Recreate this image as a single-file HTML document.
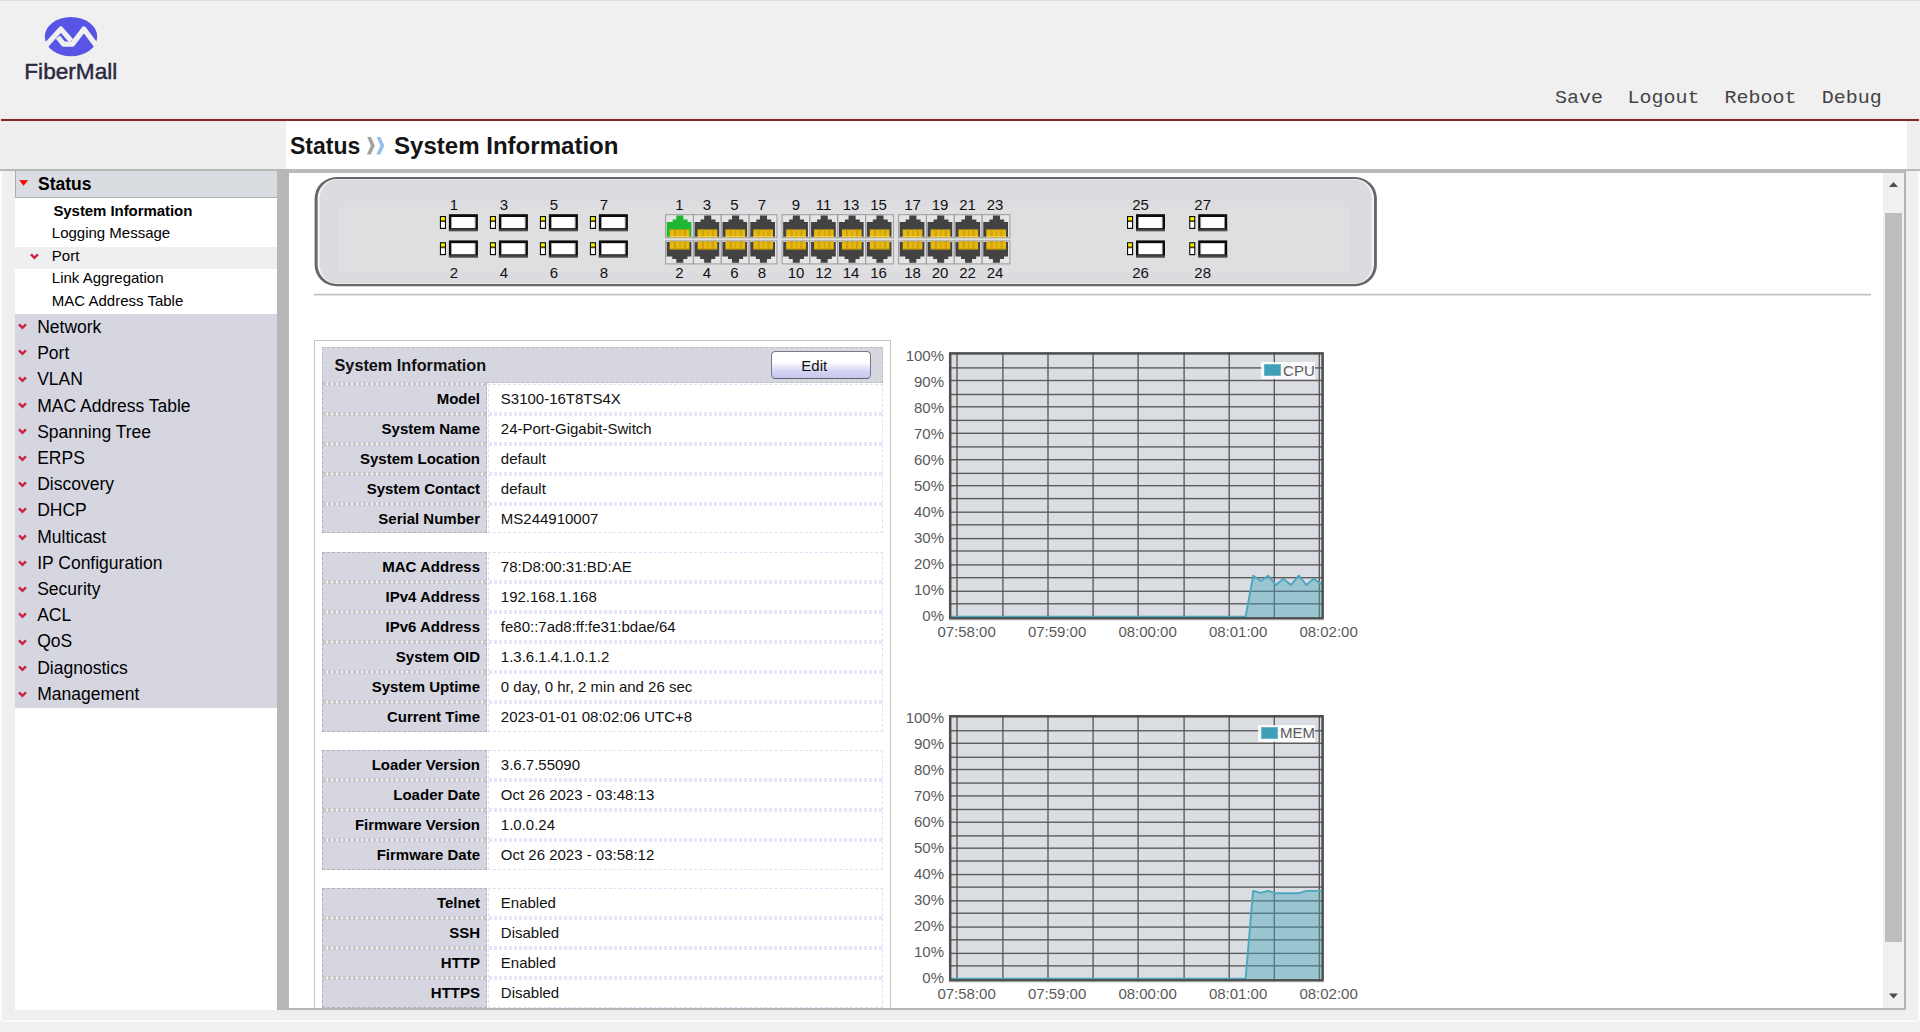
<!DOCTYPE html>
<html><head><meta charset="utf-8"><title>System Information</title><style>
*{box-sizing:border-box}
html,body{margin:0;padding:0}
body{width:1920px;height:1032px;overflow:hidden;position:relative;background:#f0f0f0;font-family:"Liberation Sans",sans-serif;color:#000}
.a{position:absolute}
.t{position:absolute;white-space:nowrap;line-height:1}
.mono{font-family:"Liberation Mono",monospace}
.m{font-size:17.5px;left:37.2px}
.s{font-size:15px;left:51.8px}
.lb{position:absolute;left:0;width:158px;height:26px;text-align:right;font-weight:bold;font-size:15px;line-height:26px;white-space:nowrap}
.vl{position:absolute;left:178.8px;height:26px;font-size:15px;line-height:26px;white-space:nowrap;color:#111}
.lbg{position:absolute;left:0;width:165px;background:#d6d6e0;border:1px dashed #b2b2ba}
.vbg{position:absolute;left:166px;width:395px;background:#fff;border:1px dashed #dde1f6}
.sep{position:absolute;left:1px;width:163px;height:4px;background:repeating-linear-gradient(90deg,#c6c8ca 0,#c6c8ca 3px,#dcdce4 3px,#dcdce4 5px)}
.sep:after{content:'';position:absolute;left:0;right:0;top:1px;height:2px;background:repeating-linear-gradient(90deg,#c6c8ca 0,#c6c8ca 3px,#f2f2f7 3px,#f2f2f7 5px)}
.vsep{position:absolute;left:167px;width:393px;height:4px;background:repeating-linear-gradient(90deg,#e4e7fa 0,#e4e7fa 3px,#ffffff 3px,#ffffff 5px)}
.yl{position:absolute;width:50px;text-align:right;font-size:15px;color:#595959;line-height:1;white-space:nowrap}
.xl{position:absolute;width:80px;text-align:center;font-size:15px;color:#595959;line-height:1;white-space:nowrap}
.pn{position:absolute;width:40px;text-align:center;font-size:15px;line-height:1;color:#111}
</style></head><body>
<div class="a" style="left:0;top:0;width:1920px;height:1px;background:#dddddb"></div>
<div class="a" style="left:0;top:171px;width:2px;height:849px;background:#fbfbfb"></div>
<div class="a" style="left:1918px;top:171px;width:2px;height:849px;background:#fbfbfb"></div>
<div class="a" style="left:2px;top:1020px;width:1916px;height:2px;background:#fbfbfb"></div>
<div class="a" style="left:2px;top:121px;width:1916px;height:899px;background:#efefef"></div>
<div class="a" style="left:1px;top:119px;width:1918px;height:2px;background:#852728;box-shadow:0 0 1px #e9a0a0"></div>
<div class="a" style="left:286px;top:121px;width:1621px;height:49px;background:#fff"></div>
<div class="a" style="left:15px;top:171px;width:262px;height:839px;background:#fff"></div>
<div class="a" style="left:288px;top:171px;width:1616px;height:837px;background:#fff"></div>
<div class="a" style="left:0;top:169px;width:1920px;height:2px;background:#b9b9b9"></div>
<div class="a" style="left:288px;top:171px;width:1618px;height:2px;background:#b9b9b9"></div>
<div class="a" style="left:277px;top:169px;width:11.5px;height:841px;background:#b7b7b7"></div>
<div class="a" style="left:1904px;top:171px;width:2px;height:839px;background:#b5b5b5"></div>
<div class="a" style="left:277px;top:1008px;width:1629px;height:2px;background:#b5b5b5"></div>
<svg class="a" style="left:40px;top:12px" width="70" height="50" viewBox="40 12 70 50">
<ellipse cx="71" cy="36.6" rx="26.2" ry="19.7" fill="#5854e6"/>
<path d="M45 46.4 L60.9 29.1 L71.2 40.9" fill="none" stroke="#f0f0f0" stroke-width="5.2" stroke-linejoin="round"/>
<path d="M57.9 37.2 L63.6 44.1 L72.4 44.1 L83.9 29.1 L96.8 46.3" fill="none" stroke="#f0f0f0" stroke-width="5.2" stroke-linejoin="round"/>
</svg>
<svg class="a" style="left:20px;top:58px" width="110" height="28" viewBox="0 0 110 28"><text x="4.3" y="20.5" font-family="Liberation Sans" font-size="22.6" fill="#2b2940" textLength="93" lengthAdjust="spacingAndGlyphs" stroke="#2b2940" stroke-width="0.45">FiberMall</text></svg>
<div class="t mono" style="left:1555px;top:88px;font-size:20px;color:#454545;transform-origin:0 15.3px;transform:scaleY(0.89)">Save</div>
<div class="t mono" style="left:1627.6px;top:88px;font-size:20px;color:#454545;transform-origin:0 15.3px;transform:scaleY(0.89)">Logout</div>
<div class="t mono" style="left:1724.6px;top:88px;font-size:20px;color:#454545;transform-origin:0 15.3px;transform:scaleY(0.89)">Reboot</div>
<div class="t mono" style="left:1821.8px;top:88px;font-size:20px;color:#454545;transform-origin:0 15.3px;transform:scaleY(0.89)">Debug</div>
<div class="t" style="left:289.5px;top:134.2px;font-size:24.4px;font-weight:bold;color:#151515;transform-origin:0 0;transform:scaleX(0.942)">Status</div>
<div class="t" style="left:393.5px;top:134.2px;font-size:24.4px;font-weight:bold;color:#151515;transform-origin:0 0;transform:scaleX(0.986)">System Information</div>
<svg class="a" style="left:364px;top:136px" width="24" height="22" viewBox="364 136 24 22">
<path d="M367.2 136.9 L371.0 136.9 L374.8 145.7 L370.8 154.6 L366.8 154.6 L370.9 145.7 Z" fill="#a3a3a3"/>
<path d="M376.7 136.9 L380.5 136.9 L384.3 145.7 L380.3 154.6 L376.3 154.6 L380.4 145.7 Z" fill="#95bfec"/>
</svg>
<div class="a" style="left:15px;top:171px;width:262px;height:27px;background:#d9dce0;border-left:1px solid #adadad;border-bottom:1px solid #b3b3b3"></div>
<svg class="a" style="left:18px;top:178px" width="12" height="10" viewBox="18 178 12 10">
<defs><linearGradient id="tg" x1="0" y1="0" x2="0" y2="1"><stop offset="0" stop-color="#d93030"/><stop offset="0.35" stop-color="#ff0000"/><stop offset="1" stop-color="#ff0000"/></linearGradient></defs>
<path d="M19.0 180.0 L28.2 180.0 L23.6 185.8 Z" fill="url(#tg)"/></svg>
<div class="t" style="left:38px;top:175.5px;font-size:17.5px;font-weight:bold">Status</div>
<div class="a" style="left:15px;top:247px;width:262px;height:22px;background:#efefef"></div>
<div class="t s" style="top:203.2px;left:53.4px;font-weight:bold;letter-spacing:-0.065px">System Information</div>
<div class="t s" style="top:224.6px">Logging Message</div>
<div class="t s" style="top:247.7px">Port</div>
<div class="t s" style="top:269.9px">Link Aggregation</div>
<div class="t s" style="top:293.0px">MAC Address Table</div>
<svg class="a" style="left:29.4px;top:252.4px" width="11" height="9" viewBox="-1 -1 11 9"><path d="M1.0 1.35 L4.45 4.75 L7.9 1.35" fill="none" stroke="#cb2143" stroke-width="2.45" stroke-linejoin="miter"/></svg>
<div class="a" style="left:15px;top:314px;width:262px;height:394px;background:#d6d6e0"></div>
<div class="t m" style="top:318.55px">Network</div>
<svg class="a" style="left:17px;top:322.1px" width="11" height="9" viewBox="-1 -1 11 9"><path d="M1.0 1.35 L4.45 4.75 L7.9 1.35" fill="none" stroke="#cb2143" stroke-width="2.45" stroke-linejoin="miter"/></svg>
<div class="t m" style="top:344.55px">Port</div>
<svg class="a" style="left:17px;top:348.40000000000003px" width="11" height="9" viewBox="-1 -1 11 9"><path d="M1.0 1.35 L4.45 4.75 L7.9 1.35" fill="none" stroke="#cb2143" stroke-width="2.45" stroke-linejoin="miter"/></svg>
<div class="t m" style="top:370.55px">VLAN</div>
<svg class="a" style="left:17px;top:374.70000000000005px" width="11" height="9" viewBox="-1 -1 11 9"><path d="M1.0 1.35 L4.45 4.75 L7.9 1.35" fill="none" stroke="#cb2143" stroke-width="2.45" stroke-linejoin="miter"/></svg>
<div class="t m" style="top:397.55px">MAC Address Table</div>
<svg class="a" style="left:17px;top:401.0px" width="11" height="9" viewBox="-1 -1 11 9"><path d="M1.0 1.35 L4.45 4.75 L7.9 1.35" fill="none" stroke="#cb2143" stroke-width="2.45" stroke-linejoin="miter"/></svg>
<div class="t m" style="top:423.55px">Spanning Tree</div>
<svg class="a" style="left:17px;top:427.3px" width="11" height="9" viewBox="-1 -1 11 9"><path d="M1.0 1.35 L4.45 4.75 L7.9 1.35" fill="none" stroke="#cb2143" stroke-width="2.45" stroke-linejoin="miter"/></svg>
<div class="t m" style="top:449.55px">ERPS</div>
<svg class="a" style="left:17px;top:453.6px" width="11" height="9" viewBox="-1 -1 11 9"><path d="M1.0 1.35 L4.45 4.75 L7.9 1.35" fill="none" stroke="#cb2143" stroke-width="2.45" stroke-linejoin="miter"/></svg>
<div class="t m" style="top:475.55px">Discovery</div>
<svg class="a" style="left:17px;top:479.90000000000003px" width="11" height="9" viewBox="-1 -1 11 9"><path d="M1.0 1.35 L4.45 4.75 L7.9 1.35" fill="none" stroke="#cb2143" stroke-width="2.45" stroke-linejoin="miter"/></svg>
<div class="t m" style="top:501.55px">DHCP</div>
<svg class="a" style="left:17px;top:506.20000000000005px" width="11" height="9" viewBox="-1 -1 11 9"><path d="M1.0 1.35 L4.45 4.75 L7.9 1.35" fill="none" stroke="#cb2143" stroke-width="2.45" stroke-linejoin="miter"/></svg>
<div class="t m" style="top:528.55px">Multicast</div>
<svg class="a" style="left:17px;top:532.5px" width="11" height="9" viewBox="-1 -1 11 9"><path d="M1.0 1.35 L4.45 4.75 L7.9 1.35" fill="none" stroke="#cb2143" stroke-width="2.45" stroke-linejoin="miter"/></svg>
<div class="t m" style="top:554.55px">IP Configuration</div>
<svg class="a" style="left:17px;top:558.8000000000001px" width="11" height="9" viewBox="-1 -1 11 9"><path d="M1.0 1.35 L4.45 4.75 L7.9 1.35" fill="none" stroke="#cb2143" stroke-width="2.45" stroke-linejoin="miter"/></svg>
<div class="t m" style="top:580.55px">Security</div>
<svg class="a" style="left:17px;top:585.1px" width="11" height="9" viewBox="-1 -1 11 9"><path d="M1.0 1.35 L4.45 4.75 L7.9 1.35" fill="none" stroke="#cb2143" stroke-width="2.45" stroke-linejoin="miter"/></svg>
<div class="t m" style="top:606.55px">ACL</div>
<svg class="a" style="left:17px;top:611.4000000000001px" width="11" height="9" viewBox="-1 -1 11 9"><path d="M1.0 1.35 L4.45 4.75 L7.9 1.35" fill="none" stroke="#cb2143" stroke-width="2.45" stroke-linejoin="miter"/></svg>
<div class="t m" style="top:632.55px">QoS</div>
<svg class="a" style="left:17px;top:637.7px" width="11" height="9" viewBox="-1 -1 11 9"><path d="M1.0 1.35 L4.45 4.75 L7.9 1.35" fill="none" stroke="#cb2143" stroke-width="2.45" stroke-linejoin="miter"/></svg>
<div class="t m" style="top:659.55px">Diagnostics</div>
<svg class="a" style="left:17px;top:664.0px" width="11" height="9" viewBox="-1 -1 11 9"><path d="M1.0 1.35 L4.45 4.75 L7.9 1.35" fill="none" stroke="#cb2143" stroke-width="2.45" stroke-linejoin="miter"/></svg>
<div class="t m" style="top:685.55px">Management</div>
<svg class="a" style="left:17px;top:690.3px" width="11" height="9" viewBox="-1 -1 11 9"><path d="M1.0 1.35 L4.45 4.75 L7.9 1.35" fill="none" stroke="#cb2143" stroke-width="2.45" stroke-linejoin="miter"/></svg>
<div class="a" style="left:1883px;top:173px;width:21px;height:835px;background:#f0f0f0"></div>
<div class="a" style="left:1885px;top:213px;width:17px;height:729px;background:#bdbdbd"></div>
<svg class="a" style="left:1887px;top:180px" width="13" height="9" viewBox="0 0 13 9"><path d="M2 7 L6.5 2 L11 7 Z" fill="#4d4d4d"/></svg>
<svg class="a" style="left:1887px;top:992px" width="13" height="9" viewBox="0 0 13 9"><path d="M2 1.6 L11 1.6 L6.5 6.6 Z" fill="#4d4d4d"/></svg>
<svg class="a" style="left:314px;top:176px" width="1064" height="112" viewBox="314 176 1064 112"><rect x="314.6" y="177" width="1062.3" height="109.2" rx="22" ry="21.5" fill="#676767"/><rect x="317.6" y="179.1" width="1056.4" height="104.8" rx="19.3" ry="19.3" fill="#f5f5f9"/><rect x="319.7" y="179.6" width="1052.2" height="104" rx="18" ry="18.6" fill="#dcdce0"/><rect x="338" y="206.6" width="1012" height="66" fill="#dfdfe1"/><g transform="translate(438.90 213.20)"><rect x="1" y="2.8" width="6.1" height="13" fill="#0a0a0a"/><rect x="2.1" y="3.9" width="3.9" height="3.4" fill="#fff200"/><rect x="2.1" y="7.3" width="3.9" height="1.5" fill="#5a4a00"/><rect x="2.1" y="8.8" width="3.9" height="5.8" fill="#ffffff"/><rect x="10" y="1" width="29" height="16.9" fill="#0c0c0c"/><rect x="10" y="15.6" width="29" height="2.3" fill="#3c3c3c"/><rect x="10" y="17.1" width="29" height="0.8" fill="#5a5a5a"/><rect x="12.2" y="3.8" width="24.3" height="11.1" fill="#ffffff"/><rect x="12.2" y="3.8" width="0.7" height="11.1" fill="#8a8a8a"/><rect x="35.8" y="3.8" width="0.7" height="11.1" fill="#8a8a8a"/></g><g transform="translate(438.90 239.40)"><rect x="1" y="2.8" width="6.1" height="13" fill="#0a0a0a"/><rect x="2.1" y="3.9" width="3.9" height="3.4" fill="#fff200"/><rect x="2.1" y="7.3" width="3.9" height="1.5" fill="#5a4a00"/><rect x="2.1" y="8.8" width="3.9" height="5.8" fill="#ffffff"/><rect x="10" y="1" width="29" height="16.9" fill="#0c0c0c"/><rect x="10" y="15.6" width="29" height="2.3" fill="#3c3c3c"/><rect x="10" y="17.1" width="29" height="0.8" fill="#5a5a5a"/><rect x="12.2" y="3.8" width="24.3" height="11.1" fill="#ffffff"/><rect x="12.2" y="3.8" width="0.7" height="11.1" fill="#8a8a8a"/><rect x="35.8" y="3.8" width="0.7" height="11.1" fill="#8a8a8a"/></g><g transform="translate(488.90 213.20)"><rect x="1" y="2.8" width="6.1" height="13" fill="#0a0a0a"/><rect x="2.1" y="3.9" width="3.9" height="3.4" fill="#fff200"/><rect x="2.1" y="7.3" width="3.9" height="1.5" fill="#5a4a00"/><rect x="2.1" y="8.8" width="3.9" height="5.8" fill="#ffffff"/><rect x="10" y="1" width="29" height="16.9" fill="#0c0c0c"/><rect x="10" y="15.6" width="29" height="2.3" fill="#3c3c3c"/><rect x="10" y="17.1" width="29" height="0.8" fill="#5a5a5a"/><rect x="12.2" y="3.8" width="24.3" height="11.1" fill="#ffffff"/><rect x="12.2" y="3.8" width="0.7" height="11.1" fill="#8a8a8a"/><rect x="35.8" y="3.8" width="0.7" height="11.1" fill="#8a8a8a"/></g><g transform="translate(488.90 239.40)"><rect x="1" y="2.8" width="6.1" height="13" fill="#0a0a0a"/><rect x="2.1" y="3.9" width="3.9" height="3.4" fill="#fff200"/><rect x="2.1" y="7.3" width="3.9" height="1.5" fill="#5a4a00"/><rect x="2.1" y="8.8" width="3.9" height="5.8" fill="#ffffff"/><rect x="10" y="1" width="29" height="16.9" fill="#0c0c0c"/><rect x="10" y="15.6" width="29" height="2.3" fill="#3c3c3c"/><rect x="10" y="17.1" width="29" height="0.8" fill="#5a5a5a"/><rect x="12.2" y="3.8" width="24.3" height="11.1" fill="#ffffff"/><rect x="12.2" y="3.8" width="0.7" height="11.1" fill="#8a8a8a"/><rect x="35.8" y="3.8" width="0.7" height="11.1" fill="#8a8a8a"/></g><g transform="translate(538.90 213.20)"><rect x="1" y="2.8" width="6.1" height="13" fill="#0a0a0a"/><rect x="2.1" y="3.9" width="3.9" height="3.4" fill="#fff200"/><rect x="2.1" y="7.3" width="3.9" height="1.5" fill="#5a4a00"/><rect x="2.1" y="8.8" width="3.9" height="5.8" fill="#ffffff"/><rect x="10" y="1" width="29" height="16.9" fill="#0c0c0c"/><rect x="10" y="15.6" width="29" height="2.3" fill="#3c3c3c"/><rect x="10" y="17.1" width="29" height="0.8" fill="#5a5a5a"/><rect x="12.2" y="3.8" width="24.3" height="11.1" fill="#ffffff"/><rect x="12.2" y="3.8" width="0.7" height="11.1" fill="#8a8a8a"/><rect x="35.8" y="3.8" width="0.7" height="11.1" fill="#8a8a8a"/></g><g transform="translate(538.90 239.40)"><rect x="1" y="2.8" width="6.1" height="13" fill="#0a0a0a"/><rect x="2.1" y="3.9" width="3.9" height="3.4" fill="#fff200"/><rect x="2.1" y="7.3" width="3.9" height="1.5" fill="#5a4a00"/><rect x="2.1" y="8.8" width="3.9" height="5.8" fill="#ffffff"/><rect x="10" y="1" width="29" height="16.9" fill="#0c0c0c"/><rect x="10" y="15.6" width="29" height="2.3" fill="#3c3c3c"/><rect x="10" y="17.1" width="29" height="0.8" fill="#5a5a5a"/><rect x="12.2" y="3.8" width="24.3" height="11.1" fill="#ffffff"/><rect x="12.2" y="3.8" width="0.7" height="11.1" fill="#8a8a8a"/><rect x="35.8" y="3.8" width="0.7" height="11.1" fill="#8a8a8a"/></g><g transform="translate(588.90 213.20)"><rect x="1" y="2.8" width="6.1" height="13" fill="#0a0a0a"/><rect x="2.1" y="3.9" width="3.9" height="3.4" fill="#fff200"/><rect x="2.1" y="7.3" width="3.9" height="1.5" fill="#5a4a00"/><rect x="2.1" y="8.8" width="3.9" height="5.8" fill="#ffffff"/><rect x="10" y="1" width="29" height="16.9" fill="#0c0c0c"/><rect x="10" y="15.6" width="29" height="2.3" fill="#3c3c3c"/><rect x="10" y="17.1" width="29" height="0.8" fill="#5a5a5a"/><rect x="12.2" y="3.8" width="24.3" height="11.1" fill="#ffffff"/><rect x="12.2" y="3.8" width="0.7" height="11.1" fill="#8a8a8a"/><rect x="35.8" y="3.8" width="0.7" height="11.1" fill="#8a8a8a"/></g><g transform="translate(588.90 239.40)"><rect x="1" y="2.8" width="6.1" height="13" fill="#0a0a0a"/><rect x="2.1" y="3.9" width="3.9" height="3.4" fill="#fff200"/><rect x="2.1" y="7.3" width="3.9" height="1.5" fill="#5a4a00"/><rect x="2.1" y="8.8" width="3.9" height="5.8" fill="#ffffff"/><rect x="10" y="1" width="29" height="16.9" fill="#0c0c0c"/><rect x="10" y="15.6" width="29" height="2.3" fill="#3c3c3c"/><rect x="10" y="17.1" width="29" height="0.8" fill="#5a5a5a"/><rect x="12.2" y="3.8" width="24.3" height="11.1" fill="#ffffff"/><rect x="12.2" y="3.8" width="0.7" height="11.1" fill="#8a8a8a"/><rect x="35.8" y="3.8" width="0.7" height="11.1" fill="#8a8a8a"/></g><g transform="translate(1126.00 213.20)"><rect x="1" y="2.8" width="6.1" height="13" fill="#0a0a0a"/><rect x="2.1" y="3.9" width="3.9" height="3.4" fill="#fff200"/><rect x="2.1" y="7.3" width="3.9" height="1.5" fill="#5a4a00"/><rect x="2.1" y="8.8" width="3.9" height="5.8" fill="#ffffff"/><rect x="10" y="1" width="29" height="16.9" fill="#0c0c0c"/><rect x="10" y="15.6" width="29" height="2.3" fill="#3c3c3c"/><rect x="10" y="17.1" width="29" height="0.8" fill="#5a5a5a"/><rect x="12.2" y="3.8" width="24.3" height="11.1" fill="#ffffff"/><rect x="12.2" y="3.8" width="0.7" height="11.1" fill="#8a8a8a"/><rect x="35.8" y="3.8" width="0.7" height="11.1" fill="#8a8a8a"/></g><g transform="translate(1126.00 239.40)"><rect x="1" y="2.8" width="6.1" height="13" fill="#0a0a0a"/><rect x="2.1" y="3.9" width="3.9" height="3.4" fill="#fff200"/><rect x="2.1" y="7.3" width="3.9" height="1.5" fill="#5a4a00"/><rect x="2.1" y="8.8" width="3.9" height="5.8" fill="#ffffff"/><rect x="10" y="1" width="29" height="16.9" fill="#0c0c0c"/><rect x="10" y="15.6" width="29" height="2.3" fill="#3c3c3c"/><rect x="10" y="17.1" width="29" height="0.8" fill="#5a5a5a"/><rect x="12.2" y="3.8" width="24.3" height="11.1" fill="#ffffff"/><rect x="12.2" y="3.8" width="0.7" height="11.1" fill="#8a8a8a"/><rect x="35.8" y="3.8" width="0.7" height="11.1" fill="#8a8a8a"/></g><g transform="translate(1188.20 213.20)"><rect x="1" y="2.8" width="6.1" height="13" fill="#0a0a0a"/><rect x="2.1" y="3.9" width="3.9" height="3.4" fill="#fff200"/><rect x="2.1" y="7.3" width="3.9" height="1.5" fill="#5a4a00"/><rect x="2.1" y="8.8" width="3.9" height="5.8" fill="#ffffff"/><rect x="10" y="1" width="29" height="16.9" fill="#0c0c0c"/><rect x="10" y="15.6" width="29" height="2.3" fill="#3c3c3c"/><rect x="10" y="17.1" width="29" height="0.8" fill="#5a5a5a"/><rect x="12.2" y="3.8" width="24.3" height="11.1" fill="#ffffff"/><rect x="12.2" y="3.8" width="0.7" height="11.1" fill="#8a8a8a"/><rect x="35.8" y="3.8" width="0.7" height="11.1" fill="#8a8a8a"/></g><g transform="translate(1188.20 239.40)"><rect x="1" y="2.8" width="6.1" height="13" fill="#0a0a0a"/><rect x="2.1" y="3.9" width="3.9" height="3.4" fill="#fff200"/><rect x="2.1" y="7.3" width="3.9" height="1.5" fill="#5a4a00"/><rect x="2.1" y="8.8" width="3.9" height="5.8" fill="#ffffff"/><rect x="10" y="1" width="29" height="16.9" fill="#0c0c0c"/><rect x="10" y="15.6" width="29" height="2.3" fill="#3c3c3c"/><rect x="10" y="17.1" width="29" height="0.8" fill="#5a5a5a"/><rect x="12.2" y="3.8" width="24.3" height="11.1" fill="#ffffff"/><rect x="12.2" y="3.8" width="0.7" height="11.1" fill="#8a8a8a"/><rect x="35.8" y="3.8" width="0.7" height="11.1" fill="#8a8a8a"/></g><g transform="translate(665.10 214.2)"><rect x="0" y="0" width="28.7" height="24.0" fill="#9c9c9c"/><rect x="1" y="1" width="26.7" height="22.0" fill="#e5e5e5"/><path d="M11.20 1.40 L18.30 1.40 L18.30 5.35 L22.50 5.35 L22.50 7.90 L26.30 7.90 L26.30 22.60 L1.60 22.60 L1.60 7.90 L7.60 7.90 L7.60 5.35 L11.20 5.35 Z" fill="#1fb634"/><rect x="4.60" y="15.3" width="19.70" height="8.0" fill="#e7b90e"/><rect x="8.93" y="15.3" width="0.9" height="8.0" fill="#c79c10"/><rect x="9.92" y="15.3" width="0.9" height="8.0" fill="#c79c10"/><rect x="14.45" y="15.3" width="0.9" height="8.0" fill="#c79c10"/><rect x="18.78" y="15.3" width="0.9" height="8.0" fill="#c79c10"/><rect x="19.97" y="15.3" width="0.9" height="8.0" fill="#c79c10"/><rect x="4.60" y="22.10" width="19.70" height="0.8" fill="#f1d77a"/><rect x="4.60" y="15.30" width="19.70" height="0.7" fill="#b88f0c" fill-opacity="0.7"/></g><g transform="translate(665.10 240.4)"><rect x="0" y="0" width="28.7" height="24.0" fill="#9c9c9c"/><rect x="1" y="1" width="26.7" height="22.0" fill="#e5e5e5"/><path d="M1.60 1.60 L26.30 1.60 L26.30 16.00 L22.30 16.00 L22.30 18.60 L18.20 18.60 L18.20 22.40 L11.20 22.40 L11.20 18.60 L7.20 18.60 L7.20 16.00 L1.60 16.00 Z" fill="#424242"/><rect x="4.60" y="1.1" width="19.70" height="7.9" fill="#e7b90e"/><rect x="8.93" y="1.1" width="0.9" height="7.9" fill="#c79c10"/><rect x="9.92" y="1.1" width="0.9" height="7.9" fill="#c79c10"/><rect x="14.45" y="1.1" width="0.9" height="7.9" fill="#c79c10"/><rect x="18.78" y="1.1" width="0.9" height="7.9" fill="#c79c10"/><rect x="19.97" y="1.1" width="0.9" height="7.9" fill="#c79c10"/><rect x="4.60" y="8.20" width="19.70" height="0.8" fill="#b88f0c"/><rect x="4.60" y="1.10" width="19.70" height="0.7" fill="#b88f0c" fill-opacity="0.7"/></g><g transform="translate(692.97 214.2)"><rect x="0" y="0" width="28.7" height="24.0" fill="#9c9c9c"/><rect x="1" y="1" width="26.7" height="22.0" fill="#e5e5e5"/><path d="M11.20 1.40 L18.30 1.40 L18.30 5.35 L22.50 5.35 L22.50 7.90 L26.30 7.90 L26.30 22.60 L1.60 22.60 L1.60 7.90 L7.60 7.90 L7.60 5.35 L11.20 5.35 Z" fill="#424242"/><rect x="4.60" y="15.3" width="19.70" height="8.0" fill="#e7b90e"/><rect x="8.93" y="15.3" width="0.9" height="8.0" fill="#c79c10"/><rect x="9.92" y="15.3" width="0.9" height="8.0" fill="#c79c10"/><rect x="14.45" y="15.3" width="0.9" height="8.0" fill="#c79c10"/><rect x="18.78" y="15.3" width="0.9" height="8.0" fill="#c79c10"/><rect x="19.97" y="15.3" width="0.9" height="8.0" fill="#c79c10"/><rect x="4.60" y="22.10" width="19.70" height="0.8" fill="#f1d77a"/><rect x="4.60" y="15.30" width="19.70" height="0.7" fill="#b88f0c" fill-opacity="0.7"/></g><g transform="translate(692.97 240.4)"><rect x="0" y="0" width="28.7" height="24.0" fill="#9c9c9c"/><rect x="1" y="1" width="26.7" height="22.0" fill="#e5e5e5"/><path d="M1.60 1.60 L26.30 1.60 L26.30 16.00 L22.30 16.00 L22.30 18.60 L18.20 18.60 L18.20 22.40 L11.20 22.40 L11.20 18.60 L7.20 18.60 L7.20 16.00 L1.60 16.00 Z" fill="#424242"/><rect x="4.60" y="1.1" width="19.70" height="7.9" fill="#e7b90e"/><rect x="8.93" y="1.1" width="0.9" height="7.9" fill="#c79c10"/><rect x="9.92" y="1.1" width="0.9" height="7.9" fill="#c79c10"/><rect x="14.45" y="1.1" width="0.9" height="7.9" fill="#c79c10"/><rect x="18.78" y="1.1" width="0.9" height="7.9" fill="#c79c10"/><rect x="19.97" y="1.1" width="0.9" height="7.9" fill="#c79c10"/><rect x="4.60" y="8.20" width="19.70" height="0.8" fill="#b88f0c"/><rect x="4.60" y="1.10" width="19.70" height="0.7" fill="#b88f0c" fill-opacity="0.7"/></g><g transform="translate(720.84 214.2)"><rect x="0" y="0" width="28.7" height="24.0" fill="#9c9c9c"/><rect x="1" y="1" width="26.7" height="22.0" fill="#e5e5e5"/><path d="M11.20 1.40 L18.30 1.40 L18.30 5.35 L22.50 5.35 L22.50 7.90 L26.30 7.90 L26.30 22.60 L1.60 22.60 L1.60 7.90 L7.60 7.90 L7.60 5.35 L11.20 5.35 Z" fill="#424242"/><rect x="4.60" y="15.3" width="19.70" height="8.0" fill="#e7b90e"/><rect x="8.93" y="15.3" width="0.9" height="8.0" fill="#c79c10"/><rect x="9.92" y="15.3" width="0.9" height="8.0" fill="#c79c10"/><rect x="14.45" y="15.3" width="0.9" height="8.0" fill="#c79c10"/><rect x="18.78" y="15.3" width="0.9" height="8.0" fill="#c79c10"/><rect x="19.97" y="15.3" width="0.9" height="8.0" fill="#c79c10"/><rect x="4.60" y="22.10" width="19.70" height="0.8" fill="#f1d77a"/><rect x="4.60" y="15.30" width="19.70" height="0.7" fill="#b88f0c" fill-opacity="0.7"/></g><g transform="translate(720.84 240.4)"><rect x="0" y="0" width="28.7" height="24.0" fill="#9c9c9c"/><rect x="1" y="1" width="26.7" height="22.0" fill="#e5e5e5"/><path d="M1.60 1.60 L26.30 1.60 L26.30 16.00 L22.30 16.00 L22.30 18.60 L18.20 18.60 L18.20 22.40 L11.20 22.40 L11.20 18.60 L7.20 18.60 L7.20 16.00 L1.60 16.00 Z" fill="#424242"/><rect x="4.60" y="1.1" width="19.70" height="7.9" fill="#e7b90e"/><rect x="8.93" y="1.1" width="0.9" height="7.9" fill="#c79c10"/><rect x="9.92" y="1.1" width="0.9" height="7.9" fill="#c79c10"/><rect x="14.45" y="1.1" width="0.9" height="7.9" fill="#c79c10"/><rect x="18.78" y="1.1" width="0.9" height="7.9" fill="#c79c10"/><rect x="19.97" y="1.1" width="0.9" height="7.9" fill="#c79c10"/><rect x="4.60" y="8.20" width="19.70" height="0.8" fill="#b88f0c"/><rect x="4.60" y="1.10" width="19.70" height="0.7" fill="#b88f0c" fill-opacity="0.7"/></g><g transform="translate(748.71 214.2)"><rect x="0" y="0" width="28.7" height="24.0" fill="#9c9c9c"/><rect x="1" y="1" width="26.7" height="22.0" fill="#e5e5e5"/><path d="M11.20 1.40 L18.30 1.40 L18.30 5.35 L22.50 5.35 L22.50 7.90 L26.30 7.90 L26.30 22.60 L1.60 22.60 L1.60 7.90 L7.60 7.90 L7.60 5.35 L11.20 5.35 Z" fill="#424242"/><rect x="4.60" y="15.3" width="19.70" height="8.0" fill="#e7b90e"/><rect x="8.93" y="15.3" width="0.9" height="8.0" fill="#c79c10"/><rect x="9.92" y="15.3" width="0.9" height="8.0" fill="#c79c10"/><rect x="14.45" y="15.3" width="0.9" height="8.0" fill="#c79c10"/><rect x="18.78" y="15.3" width="0.9" height="8.0" fill="#c79c10"/><rect x="19.97" y="15.3" width="0.9" height="8.0" fill="#c79c10"/><rect x="4.60" y="22.10" width="19.70" height="0.8" fill="#f1d77a"/><rect x="4.60" y="15.30" width="19.70" height="0.7" fill="#b88f0c" fill-opacity="0.7"/></g><g transform="translate(748.71 240.4)"><rect x="0" y="0" width="28.7" height="24.0" fill="#9c9c9c"/><rect x="1" y="1" width="26.7" height="22.0" fill="#e5e5e5"/><path d="M1.60 1.60 L26.30 1.60 L26.30 16.00 L22.30 16.00 L22.30 18.60 L18.20 18.60 L18.20 22.40 L11.20 22.40 L11.20 18.60 L7.20 18.60 L7.20 16.00 L1.60 16.00 Z" fill="#424242"/><rect x="4.60" y="1.1" width="19.70" height="7.9" fill="#e7b90e"/><rect x="8.93" y="1.1" width="0.9" height="7.9" fill="#c79c10"/><rect x="9.92" y="1.1" width="0.9" height="7.9" fill="#c79c10"/><rect x="14.45" y="1.1" width="0.9" height="7.9" fill="#c79c10"/><rect x="18.78" y="1.1" width="0.9" height="7.9" fill="#c79c10"/><rect x="19.97" y="1.1" width="0.9" height="7.9" fill="#c79c10"/><rect x="4.60" y="8.20" width="19.70" height="0.8" fill="#b88f0c"/><rect x="4.60" y="1.10" width="19.70" height="0.7" fill="#b88f0c" fill-opacity="0.7"/></g><g transform="translate(781.60 214.2)"><rect x="0" y="0" width="28.7" height="24.0" fill="#9c9c9c"/><rect x="1" y="1" width="26.7" height="22.0" fill="#e5e5e5"/><path d="M11.20 1.40 L18.30 1.40 L18.30 5.35 L22.50 5.35 L22.50 7.90 L26.30 7.90 L26.30 22.60 L1.60 22.60 L1.60 7.90 L7.60 7.90 L7.60 5.35 L11.20 5.35 Z" fill="#424242"/><rect x="4.60" y="15.3" width="19.70" height="8.0" fill="#e7b90e"/><rect x="8.93" y="15.3" width="0.9" height="8.0" fill="#c79c10"/><rect x="9.92" y="15.3" width="0.9" height="8.0" fill="#c79c10"/><rect x="14.45" y="15.3" width="0.9" height="8.0" fill="#c79c10"/><rect x="18.78" y="15.3" width="0.9" height="8.0" fill="#c79c10"/><rect x="19.97" y="15.3" width="0.9" height="8.0" fill="#c79c10"/><rect x="4.60" y="22.10" width="19.70" height="0.8" fill="#f1d77a"/><rect x="4.60" y="15.30" width="19.70" height="0.7" fill="#b88f0c" fill-opacity="0.7"/></g><g transform="translate(781.60 240.4)"><rect x="0" y="0" width="28.7" height="24.0" fill="#9c9c9c"/><rect x="1" y="1" width="26.7" height="22.0" fill="#e5e5e5"/><path d="M1.60 1.60 L26.30 1.60 L26.30 16.00 L22.30 16.00 L22.30 18.60 L18.20 18.60 L18.20 22.40 L11.20 22.40 L11.20 18.60 L7.20 18.60 L7.20 16.00 L1.60 16.00 Z" fill="#424242"/><rect x="4.60" y="1.1" width="19.70" height="7.9" fill="#e7b90e"/><rect x="8.93" y="1.1" width="0.9" height="7.9" fill="#c79c10"/><rect x="9.92" y="1.1" width="0.9" height="7.9" fill="#c79c10"/><rect x="14.45" y="1.1" width="0.9" height="7.9" fill="#c79c10"/><rect x="18.78" y="1.1" width="0.9" height="7.9" fill="#c79c10"/><rect x="19.97" y="1.1" width="0.9" height="7.9" fill="#c79c10"/><rect x="4.60" y="8.20" width="19.70" height="0.8" fill="#b88f0c"/><rect x="4.60" y="1.10" width="19.70" height="0.7" fill="#b88f0c" fill-opacity="0.7"/></g><g transform="translate(809.47 214.2)"><rect x="0" y="0" width="28.7" height="24.0" fill="#9c9c9c"/><rect x="1" y="1" width="26.7" height="22.0" fill="#e5e5e5"/><path d="M11.20 1.40 L18.30 1.40 L18.30 5.35 L22.50 5.35 L22.50 7.90 L26.30 7.90 L26.30 22.60 L1.60 22.60 L1.60 7.90 L7.60 7.90 L7.60 5.35 L11.20 5.35 Z" fill="#424242"/><rect x="4.60" y="15.3" width="19.70" height="8.0" fill="#e7b90e"/><rect x="8.93" y="15.3" width="0.9" height="8.0" fill="#c79c10"/><rect x="9.92" y="15.3" width="0.9" height="8.0" fill="#c79c10"/><rect x="14.45" y="15.3" width="0.9" height="8.0" fill="#c79c10"/><rect x="18.78" y="15.3" width="0.9" height="8.0" fill="#c79c10"/><rect x="19.97" y="15.3" width="0.9" height="8.0" fill="#c79c10"/><rect x="4.60" y="22.10" width="19.70" height="0.8" fill="#f1d77a"/><rect x="4.60" y="15.30" width="19.70" height="0.7" fill="#b88f0c" fill-opacity="0.7"/></g><g transform="translate(809.47 240.4)"><rect x="0" y="0" width="28.7" height="24.0" fill="#9c9c9c"/><rect x="1" y="1" width="26.7" height="22.0" fill="#e5e5e5"/><path d="M1.60 1.60 L26.30 1.60 L26.30 16.00 L22.30 16.00 L22.30 18.60 L18.20 18.60 L18.20 22.40 L11.20 22.40 L11.20 18.60 L7.20 18.60 L7.20 16.00 L1.60 16.00 Z" fill="#424242"/><rect x="4.60" y="1.1" width="19.70" height="7.9" fill="#e7b90e"/><rect x="8.93" y="1.1" width="0.9" height="7.9" fill="#c79c10"/><rect x="9.92" y="1.1" width="0.9" height="7.9" fill="#c79c10"/><rect x="14.45" y="1.1" width="0.9" height="7.9" fill="#c79c10"/><rect x="18.78" y="1.1" width="0.9" height="7.9" fill="#c79c10"/><rect x="19.97" y="1.1" width="0.9" height="7.9" fill="#c79c10"/><rect x="4.60" y="8.20" width="19.70" height="0.8" fill="#b88f0c"/><rect x="4.60" y="1.10" width="19.70" height="0.7" fill="#b88f0c" fill-opacity="0.7"/></g><g transform="translate(837.34 214.2)"><rect x="0" y="0" width="28.7" height="24.0" fill="#9c9c9c"/><rect x="1" y="1" width="26.7" height="22.0" fill="#e5e5e5"/><path d="M11.20 1.40 L18.30 1.40 L18.30 5.35 L22.50 5.35 L22.50 7.90 L26.30 7.90 L26.30 22.60 L1.60 22.60 L1.60 7.90 L7.60 7.90 L7.60 5.35 L11.20 5.35 Z" fill="#424242"/><rect x="4.60" y="15.3" width="19.70" height="8.0" fill="#e7b90e"/><rect x="8.93" y="15.3" width="0.9" height="8.0" fill="#c79c10"/><rect x="9.92" y="15.3" width="0.9" height="8.0" fill="#c79c10"/><rect x="14.45" y="15.3" width="0.9" height="8.0" fill="#c79c10"/><rect x="18.78" y="15.3" width="0.9" height="8.0" fill="#c79c10"/><rect x="19.97" y="15.3" width="0.9" height="8.0" fill="#c79c10"/><rect x="4.60" y="22.10" width="19.70" height="0.8" fill="#f1d77a"/><rect x="4.60" y="15.30" width="19.70" height="0.7" fill="#b88f0c" fill-opacity="0.7"/></g><g transform="translate(837.34 240.4)"><rect x="0" y="0" width="28.7" height="24.0" fill="#9c9c9c"/><rect x="1" y="1" width="26.7" height="22.0" fill="#e5e5e5"/><path d="M1.60 1.60 L26.30 1.60 L26.30 16.00 L22.30 16.00 L22.30 18.60 L18.20 18.60 L18.20 22.40 L11.20 22.40 L11.20 18.60 L7.20 18.60 L7.20 16.00 L1.60 16.00 Z" fill="#424242"/><rect x="4.60" y="1.1" width="19.70" height="7.9" fill="#e7b90e"/><rect x="8.93" y="1.1" width="0.9" height="7.9" fill="#c79c10"/><rect x="9.92" y="1.1" width="0.9" height="7.9" fill="#c79c10"/><rect x="14.45" y="1.1" width="0.9" height="7.9" fill="#c79c10"/><rect x="18.78" y="1.1" width="0.9" height="7.9" fill="#c79c10"/><rect x="19.97" y="1.1" width="0.9" height="7.9" fill="#c79c10"/><rect x="4.60" y="8.20" width="19.70" height="0.8" fill="#b88f0c"/><rect x="4.60" y="1.10" width="19.70" height="0.7" fill="#b88f0c" fill-opacity="0.7"/></g><g transform="translate(865.21 214.2)"><rect x="0" y="0" width="28.7" height="24.0" fill="#9c9c9c"/><rect x="1" y="1" width="26.7" height="22.0" fill="#e5e5e5"/><path d="M11.20 1.40 L18.30 1.40 L18.30 5.35 L22.50 5.35 L22.50 7.90 L26.30 7.90 L26.30 22.60 L1.60 22.60 L1.60 7.90 L7.60 7.90 L7.60 5.35 L11.20 5.35 Z" fill="#424242"/><rect x="4.60" y="15.3" width="19.70" height="8.0" fill="#e7b90e"/><rect x="8.93" y="15.3" width="0.9" height="8.0" fill="#c79c10"/><rect x="9.92" y="15.3" width="0.9" height="8.0" fill="#c79c10"/><rect x="14.45" y="15.3" width="0.9" height="8.0" fill="#c79c10"/><rect x="18.78" y="15.3" width="0.9" height="8.0" fill="#c79c10"/><rect x="19.97" y="15.3" width="0.9" height="8.0" fill="#c79c10"/><rect x="4.60" y="22.10" width="19.70" height="0.8" fill="#f1d77a"/><rect x="4.60" y="15.30" width="19.70" height="0.7" fill="#b88f0c" fill-opacity="0.7"/></g><g transform="translate(865.21 240.4)"><rect x="0" y="0" width="28.7" height="24.0" fill="#9c9c9c"/><rect x="1" y="1" width="26.7" height="22.0" fill="#e5e5e5"/><path d="M1.60 1.60 L26.30 1.60 L26.30 16.00 L22.30 16.00 L22.30 18.60 L18.20 18.60 L18.20 22.40 L11.20 22.40 L11.20 18.60 L7.20 18.60 L7.20 16.00 L1.60 16.00 Z" fill="#424242"/><rect x="4.60" y="1.1" width="19.70" height="7.9" fill="#e7b90e"/><rect x="8.93" y="1.1" width="0.9" height="7.9" fill="#c79c10"/><rect x="9.92" y="1.1" width="0.9" height="7.9" fill="#c79c10"/><rect x="14.45" y="1.1" width="0.9" height="7.9" fill="#c79c10"/><rect x="18.78" y="1.1" width="0.9" height="7.9" fill="#c79c10"/><rect x="19.97" y="1.1" width="0.9" height="7.9" fill="#c79c10"/><rect x="4.60" y="8.20" width="19.70" height="0.8" fill="#b88f0c"/><rect x="4.60" y="1.10" width="19.70" height="0.7" fill="#b88f0c" fill-opacity="0.7"/></g><g transform="translate(898.10 214.2)"><rect x="0" y="0" width="28.7" height="24.0" fill="#9c9c9c"/><rect x="1" y="1" width="26.7" height="22.0" fill="#e5e5e5"/><path d="M11.20 1.40 L18.30 1.40 L18.30 5.35 L22.50 5.35 L22.50 7.90 L26.30 7.90 L26.30 22.60 L1.60 22.60 L1.60 7.90 L7.60 7.90 L7.60 5.35 L11.20 5.35 Z" fill="#424242"/><rect x="4.60" y="15.3" width="19.70" height="8.0" fill="#e7b90e"/><rect x="8.93" y="15.3" width="0.9" height="8.0" fill="#c79c10"/><rect x="9.92" y="15.3" width="0.9" height="8.0" fill="#c79c10"/><rect x="14.45" y="15.3" width="0.9" height="8.0" fill="#c79c10"/><rect x="18.78" y="15.3" width="0.9" height="8.0" fill="#c79c10"/><rect x="19.97" y="15.3" width="0.9" height="8.0" fill="#c79c10"/><rect x="4.60" y="22.10" width="19.70" height="0.8" fill="#f1d77a"/><rect x="4.60" y="15.30" width="19.70" height="0.7" fill="#b88f0c" fill-opacity="0.7"/></g><g transform="translate(898.10 240.4)"><rect x="0" y="0" width="28.7" height="24.0" fill="#9c9c9c"/><rect x="1" y="1" width="26.7" height="22.0" fill="#e5e5e5"/><path d="M1.60 1.60 L26.30 1.60 L26.30 16.00 L22.30 16.00 L22.30 18.60 L18.20 18.60 L18.20 22.40 L11.20 22.40 L11.20 18.60 L7.20 18.60 L7.20 16.00 L1.60 16.00 Z" fill="#424242"/><rect x="4.60" y="1.1" width="19.70" height="7.9" fill="#e7b90e"/><rect x="8.93" y="1.1" width="0.9" height="7.9" fill="#c79c10"/><rect x="9.92" y="1.1" width="0.9" height="7.9" fill="#c79c10"/><rect x="14.45" y="1.1" width="0.9" height="7.9" fill="#c79c10"/><rect x="18.78" y="1.1" width="0.9" height="7.9" fill="#c79c10"/><rect x="19.97" y="1.1" width="0.9" height="7.9" fill="#c79c10"/><rect x="4.60" y="8.20" width="19.70" height="0.8" fill="#b88f0c"/><rect x="4.60" y="1.10" width="19.70" height="0.7" fill="#b88f0c" fill-opacity="0.7"/></g><g transform="translate(925.97 214.2)"><rect x="0" y="0" width="28.7" height="24.0" fill="#9c9c9c"/><rect x="1" y="1" width="26.7" height="22.0" fill="#e5e5e5"/><path d="M11.20 1.40 L18.30 1.40 L18.30 5.35 L22.50 5.35 L22.50 7.90 L26.30 7.90 L26.30 22.60 L1.60 22.60 L1.60 7.90 L7.60 7.90 L7.60 5.35 L11.20 5.35 Z" fill="#424242"/><rect x="4.60" y="15.3" width="19.70" height="8.0" fill="#e7b90e"/><rect x="8.93" y="15.3" width="0.9" height="8.0" fill="#c79c10"/><rect x="9.92" y="15.3" width="0.9" height="8.0" fill="#c79c10"/><rect x="14.45" y="15.3" width="0.9" height="8.0" fill="#c79c10"/><rect x="18.78" y="15.3" width="0.9" height="8.0" fill="#c79c10"/><rect x="19.97" y="15.3" width="0.9" height="8.0" fill="#c79c10"/><rect x="4.60" y="22.10" width="19.70" height="0.8" fill="#f1d77a"/><rect x="4.60" y="15.30" width="19.70" height="0.7" fill="#b88f0c" fill-opacity="0.7"/></g><g transform="translate(925.97 240.4)"><rect x="0" y="0" width="28.7" height="24.0" fill="#9c9c9c"/><rect x="1" y="1" width="26.7" height="22.0" fill="#e5e5e5"/><path d="M1.60 1.60 L26.30 1.60 L26.30 16.00 L22.30 16.00 L22.30 18.60 L18.20 18.60 L18.20 22.40 L11.20 22.40 L11.20 18.60 L7.20 18.60 L7.20 16.00 L1.60 16.00 Z" fill="#424242"/><rect x="4.60" y="1.1" width="19.70" height="7.9" fill="#e7b90e"/><rect x="8.93" y="1.1" width="0.9" height="7.9" fill="#c79c10"/><rect x="9.92" y="1.1" width="0.9" height="7.9" fill="#c79c10"/><rect x="14.45" y="1.1" width="0.9" height="7.9" fill="#c79c10"/><rect x="18.78" y="1.1" width="0.9" height="7.9" fill="#c79c10"/><rect x="19.97" y="1.1" width="0.9" height="7.9" fill="#c79c10"/><rect x="4.60" y="8.20" width="19.70" height="0.8" fill="#b88f0c"/><rect x="4.60" y="1.10" width="19.70" height="0.7" fill="#b88f0c" fill-opacity="0.7"/></g><g transform="translate(953.84 214.2)"><rect x="0" y="0" width="28.7" height="24.0" fill="#9c9c9c"/><rect x="1" y="1" width="26.7" height="22.0" fill="#e5e5e5"/><path d="M11.20 1.40 L18.30 1.40 L18.30 5.35 L22.50 5.35 L22.50 7.90 L26.30 7.90 L26.30 22.60 L1.60 22.60 L1.60 7.90 L7.60 7.90 L7.60 5.35 L11.20 5.35 Z" fill="#424242"/><rect x="4.60" y="15.3" width="19.70" height="8.0" fill="#e7b90e"/><rect x="8.93" y="15.3" width="0.9" height="8.0" fill="#c79c10"/><rect x="9.92" y="15.3" width="0.9" height="8.0" fill="#c79c10"/><rect x="14.45" y="15.3" width="0.9" height="8.0" fill="#c79c10"/><rect x="18.78" y="15.3" width="0.9" height="8.0" fill="#c79c10"/><rect x="19.97" y="15.3" width="0.9" height="8.0" fill="#c79c10"/><rect x="4.60" y="22.10" width="19.70" height="0.8" fill="#f1d77a"/><rect x="4.60" y="15.30" width="19.70" height="0.7" fill="#b88f0c" fill-opacity="0.7"/></g><g transform="translate(953.84 240.4)"><rect x="0" y="0" width="28.7" height="24.0" fill="#9c9c9c"/><rect x="1" y="1" width="26.7" height="22.0" fill="#e5e5e5"/><path d="M1.60 1.60 L26.30 1.60 L26.30 16.00 L22.30 16.00 L22.30 18.60 L18.20 18.60 L18.20 22.40 L11.20 22.40 L11.20 18.60 L7.20 18.60 L7.20 16.00 L1.60 16.00 Z" fill="#424242"/><rect x="4.60" y="1.1" width="19.70" height="7.9" fill="#e7b90e"/><rect x="8.93" y="1.1" width="0.9" height="7.9" fill="#c79c10"/><rect x="9.92" y="1.1" width="0.9" height="7.9" fill="#c79c10"/><rect x="14.45" y="1.1" width="0.9" height="7.9" fill="#c79c10"/><rect x="18.78" y="1.1" width="0.9" height="7.9" fill="#c79c10"/><rect x="19.97" y="1.1" width="0.9" height="7.9" fill="#c79c10"/><rect x="4.60" y="8.20" width="19.70" height="0.8" fill="#b88f0c"/><rect x="4.60" y="1.10" width="19.70" height="0.7" fill="#b88f0c" fill-opacity="0.7"/></g><g transform="translate(981.71 214.2)"><rect x="0" y="0" width="28.7" height="24.0" fill="#9c9c9c"/><rect x="1" y="1" width="26.7" height="22.0" fill="#e5e5e5"/><path d="M11.20 1.40 L18.30 1.40 L18.30 5.35 L22.50 5.35 L22.50 7.90 L26.30 7.90 L26.30 22.60 L1.60 22.60 L1.60 7.90 L7.60 7.90 L7.60 5.35 L11.20 5.35 Z" fill="#424242"/><rect x="4.60" y="15.3" width="19.70" height="8.0" fill="#e7b90e"/><rect x="8.93" y="15.3" width="0.9" height="8.0" fill="#c79c10"/><rect x="9.92" y="15.3" width="0.9" height="8.0" fill="#c79c10"/><rect x="14.45" y="15.3" width="0.9" height="8.0" fill="#c79c10"/><rect x="18.78" y="15.3" width="0.9" height="8.0" fill="#c79c10"/><rect x="19.97" y="15.3" width="0.9" height="8.0" fill="#c79c10"/><rect x="4.60" y="22.10" width="19.70" height="0.8" fill="#f1d77a"/><rect x="4.60" y="15.30" width="19.70" height="0.7" fill="#b88f0c" fill-opacity="0.7"/></g><g transform="translate(981.71 240.4)"><rect x="0" y="0" width="28.7" height="24.0" fill="#9c9c9c"/><rect x="1" y="1" width="26.7" height="22.0" fill="#e5e5e5"/><path d="M1.60 1.60 L26.30 1.60 L26.30 16.00 L22.30 16.00 L22.30 18.60 L18.20 18.60 L18.20 22.40 L11.20 22.40 L11.20 18.60 L7.20 18.60 L7.20 16.00 L1.60 16.00 Z" fill="#424242"/><rect x="4.60" y="1.1" width="19.70" height="7.9" fill="#e7b90e"/><rect x="8.93" y="1.1" width="0.9" height="7.9" fill="#c79c10"/><rect x="9.92" y="1.1" width="0.9" height="7.9" fill="#c79c10"/><rect x="14.45" y="1.1" width="0.9" height="7.9" fill="#c79c10"/><rect x="18.78" y="1.1" width="0.9" height="7.9" fill="#c79c10"/><rect x="19.97" y="1.1" width="0.9" height="7.9" fill="#c79c10"/><rect x="4.60" y="8.20" width="19.70" height="0.8" fill="#b88f0c"/><rect x="4.60" y="1.10" width="19.70" height="0.7" fill="#b88f0c" fill-opacity="0.7"/></g></svg>
<div class="pn" style="left:434px;top:197px">1</div><div class="pn" style="left:434px;top:265px">2</div><div class="pn" style="left:484px;top:197px">3</div><div class="pn" style="left:484px;top:265px">4</div><div class="pn" style="left:534px;top:197px">5</div><div class="pn" style="left:534px;top:265px">6</div><div class="pn" style="left:584px;top:197px">7</div><div class="pn" style="left:584px;top:265px">8</div><div class="pn" style="left:1120.5px;top:197px">25</div><div class="pn" style="left:1120.5px;top:265px">26</div><div class="pn" style="left:1182.7px;top:197px">27</div><div class="pn" style="left:1182.7px;top:265px">28</div><div class="pn" style="left:659.50px;top:197px">1</div><div class="pn" style="left:659.50px;top:265px">2</div><div class="pn" style="left:687.00px;top:197px">3</div><div class="pn" style="left:687.00px;top:265px">4</div><div class="pn" style="left:714.50px;top:197px">5</div><div class="pn" style="left:714.50px;top:265px">6</div><div class="pn" style="left:742.00px;top:197px">7</div><div class="pn" style="left:742.00px;top:265px">8</div><div class="pn" style="left:776.00px;top:197px">9</div><div class="pn" style="left:776.00px;top:265px">10</div><div class="pn" style="left:803.50px;top:197px">11</div><div class="pn" style="left:803.50px;top:265px">12</div><div class="pn" style="left:831.00px;top:197px">13</div><div class="pn" style="left:831.00px;top:265px">14</div><div class="pn" style="left:858.50px;top:197px">15</div><div class="pn" style="left:858.50px;top:265px">16</div><div class="pn" style="left:892.50px;top:197px">17</div><div class="pn" style="left:892.50px;top:265px">18</div><div class="pn" style="left:920.00px;top:197px">19</div><div class="pn" style="left:920.00px;top:265px">20</div><div class="pn" style="left:947.50px;top:197px">21</div><div class="pn" style="left:947.50px;top:265px">22</div><div class="pn" style="left:975.00px;top:197px">23</div><div class="pn" style="left:975.00px;top:265px">24</div>
<div class="a" style="left:314px;top:293px;width:1557px;height:1px;background:#efefef"></div><div class="a" style="left:314px;top:294px;width:1557px;height:1px;background:#c1c1c1"></div><div class="a" style="left:314px;top:295px;width:1557px;height:1px;background:#e2e2e2"></div>
<div class="a" style="left:314px;top:339.5px;width:577px;height:668.5px;border:1px solid #c6c8c6;border-bottom:none;background:#fff"></div>
<div class="a" style="left:322px;top:340px;width:570px;height:668px;overflow:hidden">
<div class="a" style="left:0;top:7px;width:561px;height:36px;background:#d6d6e0;border:1px dashed #bdbdc6"></div>
<div class="t" style="left:12.5px;top:16.6px;font-size:16.25px;font-weight:bold;color:#111">System Information</div>
<div class="a" style="left:449px;top:11px;width:100px;height:28px;border:1px solid #767c88;border-bottom-color:#5c6270;border-radius:4.5px;background:linear-gradient(#ffffff 0%,#ffffff 40%,#d4d4f3 72%,#c8c8ec 100%);font-size:15px;line-height:26px;text-align:center;padding-top:1px;padding-right:13.5px;color:#111">Edit</div>
<div class="lbg" style="top:42px;height:151px;border-top:none"></div>
<div class="vbg" style="top:44px;height:149px"></div>
<div class="sep" style="top:42px"></div>
<div class="sep" style="top:72px"></div>
<div class="vsep" style="top:72px"></div>
<div class="sep" style="top:102px"></div>
<div class="vsep" style="top:102px"></div>
<div class="sep" style="top:132px"></div>
<div class="vsep" style="top:132px"></div>
<div class="sep" style="top:162px"></div>
<div class="vsep" style="top:162px"></div>
<div class="lb" style="top:46px">Model</div><div class="vl" style="top:46px">S3100-16T8TS4X</div>
<div class="lb" style="top:76px">System Name</div><div class="vl" style="top:76px">24-Port-Gigabit-Switch</div>
<div class="lb" style="top:106px">System Location</div><div class="vl" style="top:106px">default</div>
<div class="lb" style="top:136px">System Contact</div><div class="vl" style="top:136px">default</div>
<div class="lb" style="top:166px">Serial Number</div><div class="vl" style="top:166px">MS244910007</div>
<div class="lbg" style="top:212px;height:180px"></div>
<div class="vbg" style="top:212px;height:180px"></div>
<div class="sep" style="top:240px"></div>
<div class="vsep" style="top:240px"></div>
<div class="sep" style="top:270px"></div>
<div class="vsep" style="top:270px"></div>
<div class="sep" style="top:300px"></div>
<div class="vsep" style="top:300px"></div>
<div class="sep" style="top:330px"></div>
<div class="vsep" style="top:330px"></div>
<div class="sep" style="top:360px"></div>
<div class="vsep" style="top:360px"></div>
<div class="lb" style="top:214px">MAC Address</div><div class="vl" style="top:214px">78:D8:00:31:BD:AE</div>
<div class="lb" style="top:244px">IPv4 Address</div><div class="vl" style="top:244px">192.168.1.168</div>
<div class="lb" style="top:274px">IPv6 Address</div><div class="vl" style="top:274px">fe80::7ad8:ff:fe31:bdae/64</div>
<div class="lb" style="top:304px">System OID</div><div class="vl" style="top:304px">1.3.6.1.4.1.0.1.2</div>
<div class="lb" style="top:334px">System Uptime</div><div class="vl" style="top:334px">0 day, 0 hr, 2 min and 26 sec</div>
<div class="lb" style="top:364px">Current Time</div><div class="vl" style="top:364px">2023-01-01 08:02:06 UTC+8</div>
<div class="lbg" style="top:410px;height:120px"></div>
<div class="vbg" style="top:410px;height:120px"></div>
<div class="sep" style="top:438px"></div>
<div class="vsep" style="top:438px"></div>
<div class="sep" style="top:468px"></div>
<div class="vsep" style="top:468px"></div>
<div class="sep" style="top:498px"></div>
<div class="vsep" style="top:498px"></div>
<div class="lb" style="top:412px">Loader Version</div><div class="vl" style="top:412px">3.6.7.55090</div>
<div class="lb" style="top:442px">Loader Date</div><div class="vl" style="top:442px">Oct 26 2023 - 03:48:13</div>
<div class="lb" style="top:472px">Firmware Version</div><div class="vl" style="top:472px">1.0.0.24</div>
<div class="lb" style="top:502px">Firmware Date</div><div class="vl" style="top:502px">Oct 26 2023 - 03:58:12</div>
<div class="lbg" style="top:548px;height:120px"></div>
<div class="vbg" style="top:548px;height:120px"></div>
<div class="sep" style="top:576px"></div>
<div class="vsep" style="top:576px"></div>
<div class="sep" style="top:606px"></div>
<div class="vsep" style="top:606px"></div>
<div class="sep" style="top:636px"></div>
<div class="vsep" style="top:636px"></div>
<div class="lb" style="top:550px">Telnet</div><div class="vl" style="top:550px">Enabled</div>
<div class="lb" style="top:580px">SSH</div><div class="vl" style="top:580px">Disabled</div>
<div class="lb" style="top:610px">HTTP</div><div class="vl" style="top:610px">Enabled</div>
<div class="lb" style="top:640px">HTTPS</div><div class="vl" style="top:640px">Disabled</div>
</div>
<svg class="a" style="left:948.2px;top:351px" width="376.79999999999995" height="270.55" viewBox="948.2 351 376.79999999999995 270.55"><rect x="949.2" y="352.10" width="374.79999999999995" height="267.45" fill="#dadde1"/><rect x="949.2" y="367.22" width="374.79999999999995" height="1.36" fill="#5a5a5a"/><rect x="949.2" y="379.82" width="374.79999999999995" height="1.36" fill="#5a5a5a"/><rect x="949.2" y="393.82" width="374.79999999999995" height="1.36" fill="#5a5a5a"/><rect x="949.2" y="406.12" width="374.79999999999995" height="1.36" fill="#5a5a5a"/><rect x="949.2" y="419.72" width="374.79999999999995" height="1.36" fill="#5a5a5a"/><rect x="949.2" y="432.62" width="374.79999999999995" height="1.36" fill="#5a5a5a"/><rect x="949.2" y="446.22" width="374.79999999999995" height="1.36" fill="#5a5a5a"/><rect x="949.2" y="459.02" width="374.79999999999995" height="1.36" fill="#5a5a5a"/><rect x="949.2" y="472.72" width="374.79999999999995" height="1.36" fill="#5a5a5a"/><rect x="949.2" y="485.02" width="374.79999999999995" height="1.36" fill="#5a5a5a"/><rect x="949.2" y="497.92" width="374.79999999999995" height="1.36" fill="#5a5a5a"/><rect x="949.2" y="511.52" width="374.79999999999995" height="1.36" fill="#5a5a5a"/><rect x="949.2" y="524.12" width="374.79999999999995" height="1.36" fill="#5a5a5a"/><rect x="949.2" y="537.92" width="374.79999999999995" height="1.36" fill="#5a5a5a"/><rect x="949.2" y="550.32" width="374.79999999999995" height="1.36" fill="#5a5a5a"/><rect x="949.2" y="564.22" width="374.79999999999995" height="1.36" fill="#5a5a5a"/><rect x="949.2" y="577.02" width="374.79999999999995" height="1.36" fill="#5a5a5a"/><rect x="949.2" y="590.62" width="374.79999999999995" height="1.36" fill="#5a5a5a"/><rect x="949.2" y="603.12" width="374.79999999999995" height="1.36" fill="#5a5a5a"/><rect x="956.55" y="352.10" width="1.3" height="267.45" fill="#555555"/><rect x="1002.45" y="352.10" width="1.3" height="267.45" fill="#555555"/><rect x="1047.55" y="352.10" width="1.3" height="267.45" fill="#555555"/><rect x="1092.65" y="352.10" width="1.3" height="267.45" fill="#555555"/><rect x="1137.65" y="352.10" width="1.3" height="267.45" fill="#555555"/><rect x="1183.65" y="352.10" width="1.3" height="267.45" fill="#555555"/><rect x="1228.75" y="352.10" width="1.3" height="267.45" fill="#555555"/><rect x="1273.85" y="352.10" width="1.3" height="267.45" fill="#555555"/><rect x="1318.85" y="352.10" width="1.3" height="267.45" fill="#555555"/><path d="M951.4 616.75 L1245.80 616.75 L1253.40 575.70 L1261.20 581.00 L1268.40 575.70 L1276.20 584.90 L1283.50 578.80 L1291.20 584.90 L1299.00 575.70 L1306.50 584.90 L1313.80 578.80 L1321.30 583.90 L1321.30 618.00 L951.4 618.00 Z" fill="#45a5bc" fill-opacity="0.42"/><path d="M951.4 616.75 L1245.80 616.75 L1253.40 575.70 L1261.20 581.00 L1268.40 575.70 L1276.20 584.90 L1283.50 578.80 L1291.20 584.90 L1299.00 575.70 L1306.50 584.90 L1313.80 578.80 L1321.30 583.90" fill="none" stroke="#4ba7bd" stroke-width="1.9" stroke-linejoin="round"/><rect x="950.4000000000001" y="353.40" width="372.4" height="264.95" fill="none" stroke="#4e4e4e" stroke-width="2.5"/><rect x="949.2" y="619.55" width="374.79999999999995" height="1" fill="#c8c8c8" fill-opacity="0.6"/></svg><div class="a" style="left:1261.2px;top:362.2px;width:54.0px;height:17px;background:rgba(255,255,255,0.86)"></div><div class="a" style="left:1264.2px;top:364.2px;width:17px;height:11.8px;background:#3f9fb8;border:1px solid #6fb6c9"></div><div class="t" style="left:1283.1000000000001px;top:362.6px;font-size:15px;color:#5c5c5c">CPU</div><div class="yl" style="left:894px;top:347.80px">100%</div><div class="yl" style="left:894px;top:373.82px">90%</div><div class="yl" style="left:894px;top:399.84px">80%</div><div class="yl" style="left:894px;top:425.86px">70%</div><div class="yl" style="left:894px;top:451.88px">60%</div><div class="yl" style="left:894px;top:477.90px">50%</div><div class="yl" style="left:894px;top:503.92px">40%</div><div class="yl" style="left:894px;top:529.94px">30%</div><div class="yl" style="left:894px;top:555.96px">20%</div><div class="yl" style="left:894px;top:581.98px">10%</div><div class="yl" style="left:894px;top:608.00px">0%</div><div class="xl" style="left:926.6px;top:624.2px">07:58:00</div><div class="xl" style="left:1017.1px;top:624.2px">07:59:00</div><div class="xl" style="left:1107.6px;top:624.2px">08:00:00</div><div class="xl" style="left:1198.1px;top:624.2px">08:01:00</div><div class="xl" style="left:1288.6px;top:624.2px">08:02:00</div>
<svg class="a" style="left:948.2px;top:714px" width="376.79999999999995" height="269.55" viewBox="948.2 714 376.79999999999995 269.55"><rect x="949.2" y="715.00" width="374.79999999999995" height="266.55" fill="#dadde1"/><rect x="949.2" y="730.07" width="374.79999999999995" height="1.36" fill="#5a5a5a"/><rect x="949.2" y="742.62" width="374.79999999999995" height="1.36" fill="#5a5a5a"/><rect x="949.2" y="756.58" width="374.79999999999995" height="1.36" fill="#5a5a5a"/><rect x="949.2" y="768.84" width="374.79999999999995" height="1.36" fill="#5a5a5a"/><rect x="949.2" y="782.39" width="374.79999999999995" height="1.36" fill="#5a5a5a"/><rect x="949.2" y="795.25" width="374.79999999999995" height="1.36" fill="#5a5a5a"/><rect x="949.2" y="808.80" width="374.79999999999995" height="1.36" fill="#5a5a5a"/><rect x="949.2" y="821.56" width="374.79999999999995" height="1.36" fill="#5a5a5a"/><rect x="949.2" y="835.21" width="374.79999999999995" height="1.36" fill="#5a5a5a"/><rect x="949.2" y="847.47" width="374.79999999999995" height="1.36" fill="#5a5a5a"/><rect x="949.2" y="860.33" width="374.79999999999995" height="1.36" fill="#5a5a5a"/><rect x="949.2" y="873.88" width="374.79999999999995" height="1.36" fill="#5a5a5a"/><rect x="949.2" y="886.44" width="374.79999999999995" height="1.36" fill="#5a5a5a"/><rect x="949.2" y="900.19" width="374.79999999999995" height="1.36" fill="#5a5a5a"/><rect x="949.2" y="912.55" width="374.79999999999995" height="1.36" fill="#5a5a5a"/><rect x="949.2" y="926.40" width="374.79999999999995" height="1.36" fill="#5a5a5a"/><rect x="949.2" y="939.16" width="374.79999999999995" height="1.36" fill="#5a5a5a"/><rect x="949.2" y="952.72" width="374.79999999999995" height="1.36" fill="#5a5a5a"/><rect x="949.2" y="965.17" width="374.79999999999995" height="1.36" fill="#5a5a5a"/><rect x="956.55" y="715.00" width="1.3" height="266.55" fill="#555555"/><rect x="1002.45" y="715.00" width="1.3" height="266.55" fill="#555555"/><rect x="1047.55" y="715.00" width="1.3" height="266.55" fill="#555555"/><rect x="1092.65" y="715.00" width="1.3" height="266.55" fill="#555555"/><rect x="1137.65" y="715.00" width="1.3" height="266.55" fill="#555555"/><rect x="1183.65" y="715.00" width="1.3" height="266.55" fill="#555555"/><rect x="1228.75" y="715.00" width="1.3" height="266.55" fill="#555555"/><rect x="1273.85" y="715.00" width="1.3" height="266.55" fill="#555555"/><rect x="1318.85" y="715.00" width="1.3" height="266.55" fill="#555555"/><path d="M951.4 978.76 L1245.80 978.76 L1253.30 890.91 L1260.80 892.90 L1268.30 890.91 L1275.00 893.20 L1299.20 893.20 L1306.70 890.91 L1321.30 890.91 L1321.30 980.01 L951.4 980.01 Z" fill="#45a5bc" fill-opacity="0.42"/><path d="M951.4 978.76 L1245.80 978.76 L1253.30 890.91 L1260.80 892.90 L1268.30 890.91 L1275.00 893.20 L1299.20 893.20 L1306.70 890.91 L1321.30 890.91" fill="none" stroke="#4ba7bd" stroke-width="1.9" stroke-linejoin="round"/><rect x="950.4000000000001" y="716.30" width="372.4" height="264.05" fill="none" stroke="#4e4e4e" stroke-width="2.5"/><rect x="949.2" y="981.55" width="374.79999999999995" height="1" fill="#c8c8c8" fill-opacity="0.6"/></svg><div class="a" style="left:1258px;top:725.1px;width:57.200000000000045px;height:17px;background:rgba(255,255,255,0.86)"></div><div class="a" style="left:1261px;top:727.1px;width:17px;height:11.8px;background:#3f9fb8;border:1px solid #6fb6c9"></div><div class="t" style="left:1279.9px;top:724.6px;font-size:15px;color:#5c5c5c">MEM</div><div class="yl" style="left:894px;top:709.80px">100%</div><div class="yl" style="left:894px;top:735.82px">90%</div><div class="yl" style="left:894px;top:761.84px">80%</div><div class="yl" style="left:894px;top:787.86px">70%</div><div class="yl" style="left:894px;top:813.88px">60%</div><div class="yl" style="left:894px;top:839.90px">50%</div><div class="yl" style="left:894px;top:865.92px">40%</div><div class="yl" style="left:894px;top:891.94px">30%</div><div class="yl" style="left:894px;top:917.96px">20%</div><div class="yl" style="left:894px;top:943.98px">10%</div><div class="yl" style="left:894px;top:970.00px">0%</div><div class="xl" style="left:926.6px;top:986.2px">07:58:00</div><div class="xl" style="left:1017.1px;top:986.2px">07:59:00</div><div class="xl" style="left:1107.6px;top:986.2px">08:00:00</div><div class="xl" style="left:1198.1px;top:986.2px">08:01:00</div><div class="xl" style="left:1288.6px;top:986.2px">08:02:00</div>
</body></html>
